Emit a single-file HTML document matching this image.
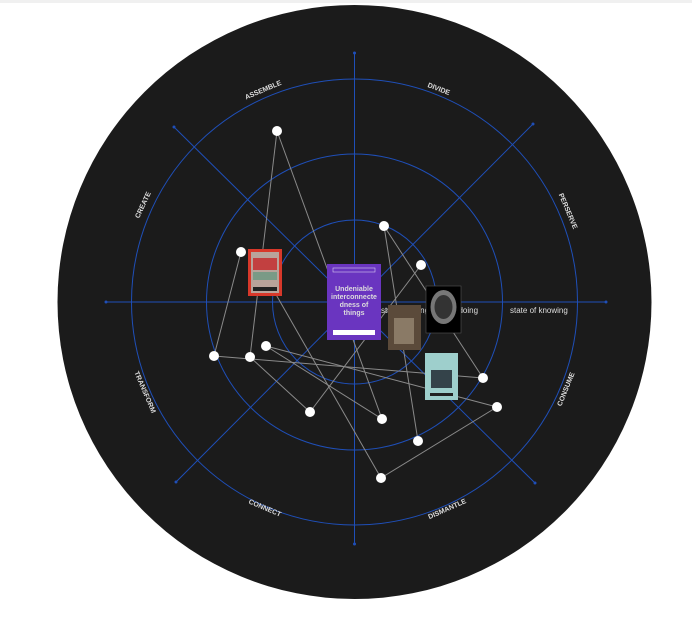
<!DOCTYPE html>
<html><head><meta charset="utf-8"><style>
html,body{margin:0;padding:0;background:#fff;width:692px;height:622px;overflow:hidden}
svg{display:block}
text{font-family:"Liberation Sans",sans-serif;font-weight:bold;fill:#ddd}
</style></head><body>
<svg width="692" height="622" viewBox="0 0 692 622">
<rect x="0" y="0" width="692" height="3" fill="#f0f0f0"/>
<circle cx="354.5" cy="302" r="297" fill="#1b1b1b"/>
<g stroke="#1f4fb8" stroke-width="1" fill="none">
<circle cx="354.5" cy="302" r="223"/>
<circle cx="354.5" cy="302" r="148"/>
<circle cx="354.5" cy="302" r="82"/>
<line x1="354.5" y1="53" x2="354.5" y2="544"/>
<line x1="106" y1="302" x2="606" y2="302"/>
<line x1="174" y1="127" x2="535" y2="483"/>
<line x1="533" y1="124" x2="176" y2="482"/>
</g>
<g fill="#1f4fb8">
<circle cx="354.5" cy="53" r="1.5"/><circle cx="354.5" cy="544" r="1.5"/>
<circle cx="106" cy="302" r="1.5"/><circle cx="606" cy="302" r="1.5"/>
<circle cx="174" cy="127" r="1.5"/><circle cx="535" cy="483" r="1.5"/>
<circle cx="533" cy="124" r="1.5"/><circle cx="176" cy="482" r="1.5"/>
</g>
<g font-size="7" text-anchor="middle">
<text transform="translate(264,92) rotate(-23)">ASSEMBLE</text>
<text transform="translate(438,91) rotate(21)">DIVIDE</text>
<text transform="translate(566,212) rotate(67)">PERSERVE</text>
<text transform="translate(145,206) rotate(-65)">CREATE</text>
<text transform="translate(568,390) rotate(-68)">CONSUME</text>
<text transform="translate(448,511) rotate(-24)">DISMANTLE</text>
<text transform="translate(264,510) rotate(23)">CONNECT</text>
<text transform="translate(143,393) rotate(67)">TRANSFORM</text>
</g>
<g stroke="#8a8a8a" stroke-width="1">
<line x1="277" y1="131" x2="250" y2="357"/>
<line x1="277" y1="131" x2="382" y2="419"/>
<line x1="241" y1="252" x2="214" y2="356"/>
<line x1="384" y1="226" x2="418" y2="441"/>
<line x1="384" y1="226" x2="483" y2="378"/>
<line x1="421" y1="265" x2="310" y2="412"/>
<line x1="214" y1="356" x2="483" y2="378"/>
<line x1="250" y1="357" x2="310" y2="412"/>
<line x1="266" y1="346" x2="382" y2="419"/>
<line x1="266" y1="346" x2="497" y2="407"/>
<line x1="381" y1="478" x2="497" y2="407"/>
<line x1="274" y1="291" x2="381" y2="478"/>
</g>
<g fill="#fff">
<circle cx="277" cy="131" r="5"/><circle cx="241" cy="252" r="5"/>
<circle cx="384" cy="226" r="5"/><circle cx="421" cy="265" r="5"/>
<circle cx="214" cy="356" r="5"/><circle cx="250" cy="357" r="5"/>
<circle cx="266" cy="346" r="5"/><circle cx="310" cy="412" r="5"/>
<circle cx="382" cy="419" r="5"/><circle cx="418" cy="441" r="5"/>
<circle cx="381" cy="478" r="5"/><circle cx="483" cy="378" r="5"/>
<circle cx="497" cy="407" r="5"/>
</g>
<g font-size="8" fill="#ddd" font-weight="normal">
<text x="381" y="313" text-anchor="start" style="font-weight:normal">state of being</text>
<text x="430" y="313" style="font-weight:normal">state of doing</text>
<text x="510" y="313" style="font-weight:normal">state of knowing</text>
</g>
<!-- red book -->
<rect x="248" y="249" width="34" height="47" fill="#d8382a"/>
<rect x="251" y="252" width="28" height="41" fill="#b9a39a"/>
<rect x="253" y="258" width="24" height="12" fill="#c24040"/>
<rect x="253" y="272" width="24" height="8" fill="#7a9a86"/>
<rect x="253" y="287" width="24" height="4" fill="#222"/>
<!-- purple book -->
<rect x="327" y="264" width="54" height="76" fill="#6a35c0"/>
<rect x="333" y="268" width="42" height="4" fill="none" stroke="#d8c8f0" stroke-width="0.6"/>
<rect x="333" y="330" width="42" height="5" fill="#fff"/>
<g font-size="7" text-anchor="middle" style="fill:#fff">
<text x="354" y="291">Undeniable</text>
<text x="354" y="299">interconnecte</text>
<text x="354" y="307">dness of</text>
<text x="354" y="315">things</text>
</g>
<!-- brown book -->
<rect x="388" y="305" width="33" height="45" fill="#5b4a3a"/>
<rect x="394" y="318" width="20" height="26" fill="#8a7a66"/>
<!-- black book -->
<rect x="426" y="286" width="35" height="47" fill="#000" stroke="#555" stroke-width="0.6"/>
<ellipse cx="443.5" cy="307" rx="13" ry="17" fill="#777"/>
<ellipse cx="443.5" cy="307" rx="9" ry="12" fill="#333"/>
<!-- teal book -->
<rect x="425" y="353" width="33" height="47" fill="#9ecfcc"/>
<rect x="431" y="370" width="21" height="18" fill="#34434a"/>
<rect x="430" y="393" width="23" height="3" fill="#222"/>
</svg>
</body></html>
